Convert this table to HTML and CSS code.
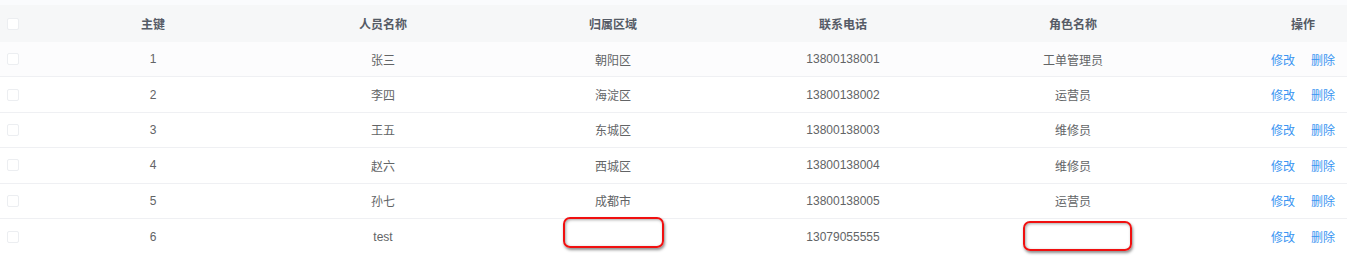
FILE: index.html
```html
<!DOCTYPE html>
<html lang="zh-CN">
<head>
<meta charset="utf-8">
<link rel="stylesheet" href="styles.css">
</head>
<body>
<div class="page">
  <div class="table">
    <div class="row head">
      <div class="cell chk"><span class="box"></span></div>
      <div class="cell">主键</div>
      <div class="cell">人员名称</div>
      <div class="cell">归属区域</div>
      <div class="cell">联系电话</div>
      <div class="cell">角色名称</div>
      <div class="cell">操作</div>
    </div>
    <div class="row first">
      <div class="cell chk"><span class="box"></span></div>
      <div class="cell">1</div><div class="cell">张三</div><div class="cell">朝阳区</div><div class="cell">13800138001</div><div class="cell">工单管理员</div>
      <div class="cell ops"><a>修改</a><a>删除</a></div>
    </div>
    <div class="row">
      <div class="cell chk"><span class="box"></span></div>
      <div class="cell">2</div><div class="cell">李四</div><div class="cell">海淀区</div><div class="cell">13800138002</div><div class="cell">运营员</div>
      <div class="cell ops"><a>修改</a><a>删除</a></div>
    </div>
    <div class="row">
      <div class="cell chk"><span class="box"></span></div>
      <div class="cell">3</div><div class="cell">王五</div><div class="cell">东城区</div><div class="cell">13800138003</div><div class="cell">维修员</div>
      <div class="cell ops"><a>修改</a><a>删除</a></div>
    </div>
    <div class="row">
      <div class="cell chk"><span class="box"></span></div>
      <div class="cell">4</div><div class="cell">赵六</div><div class="cell">西城区</div><div class="cell">13800138004</div><div class="cell">维修员</div>
      <div class="cell ops"><a>修改</a><a>删除</a></div>
    </div>
    <div class="row">
      <div class="cell chk"><span class="box"></span></div>
      <div class="cell">5</div><div class="cell">孙七</div><div class="cell">成都市</div><div class="cell">13800138005</div><div class="cell">运营员</div>
      <div class="cell ops"><a>修改</a><a>删除</a></div>
    </div>
    <div class="row last">
      <div class="cell chk"><span class="box"></span></div>
      <div class="cell">6</div><div class="cell">test</div><div class="cell"><span class="mark mark-a"></span></div><div class="cell">13079055555</div><div class="cell"><span class="mark mark-b"></span></div>
      <div class="cell ops"><a>修改</a><a>删除</a></div>
    </div>
  </div>
</div>
</body>
</html>
```
FILE: styles.css
```css
html, body {
  margin: 0;
  padding: 0;
  background: #ffffff;
  overflow: hidden;
}
.page {
  width: 1347px;
  height: 257px;
  overflow: hidden;
  padding-top: 5px;
  background: linear-gradient(#fafbfd 0, #fafbfd 5px, #fff 5px);
  box-sizing: border-box;
  font-family: "Liberation Sans", "Noto Sans CJK SC", sans-serif;
  font-size: 12px;
  color: #626466;
}
.table {
  width: 1418px;
}
.row {
  display: grid;
  grid-template-columns: 38px repeat(6, 230px);
  height: 35.4px;
  border-bottom: 1px solid #eff0f3;
  box-sizing: border-box;
  align-items: center;
}
.head {
  height: 37px;
  background: #f6f7f8;
  font-weight: bold;
  color: #555b66;
  border-bottom: none;
}
.first {
  background: #fcfcfd;
}
.last {
  border-bottom: none;
}
.cell {
  text-align: center;
  position: relative;
  display: flex;
  justify-content: center;
  align-items: center;
  height: 100%;
}
.chk {
  justify-content: flex-start;
  padding-left: 7px;
}
.box {
  display: block;
  width: 12px;
  height: 12px;
  border: 1px solid #eceef1;
  border-radius: 2px;
  background: #fff;
  box-sizing: border-box;
}
.ops {
  gap: 16px;
}
.ops a {
  color: #3a95f2;
}
.mark {
  position: absolute;
  border: 2px solid #f01010;
  border-radius: 7px;
  box-shadow: 1px 2px 3px rgba(0,0,0,0.45), inset 1px 1px 3px rgba(0,0,0,0.35);
  box-sizing: border-box;
}
.mark-a {
  left: 65px;
  top: -2px;
  width: 101px;
  height: 31px;
}
.mark-b {
  left: 65px;
  top: 2px;
  width: 109px;
  height: 30px;
}
```
